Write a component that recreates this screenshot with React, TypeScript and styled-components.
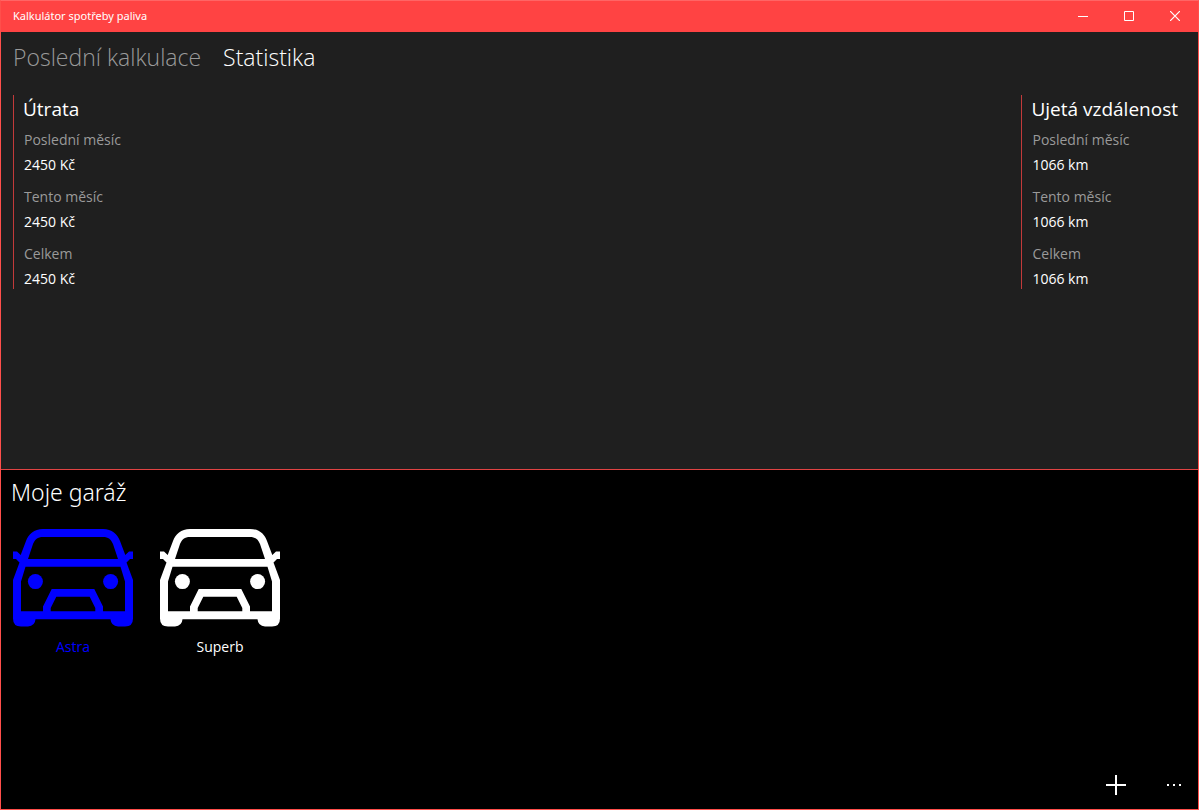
import React, { useState } from "react";
import styled, { createGlobalStyle } from "styled-components";

const GlobalStyle = createGlobalStyle`
  * { box-sizing: border-box; }
  body { margin: 0; background: #000; }
  button { font: inherit; color: inherit; background: none; border: 0; padding: 0; cursor: pointer; }
  h1, h2, h3, p, dl, dd, ul { margin: 0; padding: 0; font-weight: 400; }
`;

const Window = styled.div`
  display: flex;
  flex-direction: column;
  min-height: 100vh;
  border: 1px solid #ff4f4b;
  border-top-color: #ff6565;
  background: #000;
  color: #fff;
  font-family: "Open Sans", "Noto Sans", sans-serif;
`;

const TitleBar = styled.header`
  display: flex;
  align-items: center;
  justify-content: space-between;
  height: 31px;
  padding: 0 0 2px 12px;
  background: #ff4343;
`;

const AppTitle = styled.h1`
  font-family: "Noto Sans", "Open Sans", sans-serif;
  font-size: 11px;
  line-height: 16px;
`;

const WindowControls = styled.div`
  display: flex;
  height: 100%;
`;

const WindowButton = styled.button`
  display: grid;
  place-items: center;
  width: 46px;
`;

const Upper = styled.main`
  flex: 1;
  background: #1f1f1f;
  border-bottom: 1px solid #e04343;
`;

const Tabs = styled.div`
  display: flex;
  gap: 22px;
  padding: 9px 12px 0;
`;

const Tab = styled.button<{ $active: boolean }>`
  font-size: 23px;
  line-height: 32px;
  font-weight: 300;
  color: ${(p) => (p.$active ? "#fff" : "#9a9a9a")};
`;

const Stats = styled.div`
  display: flex;
  justify-content: space-between;
  padding: 22px 20px 0 12px;
`;

const Stat = styled.section`
  padding-left: 9px;
  border-left: 1px solid #c23a3a;
`;

const StatTitle = styled.h2`
  font-size: 19px;
  line-height: 29px;
`;

const Figures = styled.dl`
  display: grid;
  gap: 11px;
  padding: 5px 0 0 1px;
  font-size: 14px;
  line-height: 21px;
`;

const Figure = styled.div`
  display: grid;
  gap: 4px;
`;

const Label = styled.dt`
  color: #9a9a9a;
`;

const Garage = styled.section`
  display: flex;
  flex-direction: column;
  min-height: 339px;
`;

const GarageTitle = styled.h2`
  padding: 6px 10px 0;
  font-family: "Noto Sans", "Open Sans", sans-serif;
  font-size: 23px;
  line-height: 32px;
  font-weight: 300;
`;

const Cars = styled.div`
  display: flex;
  gap: 27px;
  padding: 21px 12px 0;
`;

const CarButton = styled.button<{ $selected: boolean }>`
  display: flex;
  flex-direction: column;
  align-items: center;
  gap: 7px;
  color: ${(p) => (p.$selected ? "#0000ff" : "#fff")};
  font-size: 14px;
  line-height: 25px;
`;

const CommandBar = styled.footer`
  display: flex;
  justify-content: flex-end;
  margin-top: auto;
`;

const Command = styled.button<{ $width: number }>`
  display: grid;
  place-items: center;
  width: ${(p) => p.$width}px;
  height: 48px;
`;

const CarIcon = () => (
  <svg width="120" height="98" viewBox="0 0 120 98" fill="currentColor" aria-hidden="true">
    <path
      fillRule="evenodd"
      d="M30 0H90C99 0 104.500 5 107 12L112.300 26L116 22.500H120V30H117L113.500 33.500L120 51V89.500Q120 97.500 112 97.500H105Q98 97 97.500 90.300H22.500Q22 97 15 97.500H8Q0 97.500 0 89.500V51L6.500 33.500L3 30H0V22.500H4L7.700 26L13 12C15.500 5 21 0 30 0ZM30 8C24.500 8 22 10.500 20 15L15 30H105L100 15C98 10.500 95.500 8 90 8ZM12.500 37.700L8 52.500V82.300H30V77.500L38.700 60H81.300L90 77.500V82.300H112V52.500L107.500 37.700ZM43.300 67.700L37.700 79V82.300H82.300V79L76.700 67.700Z"
    />
    <circle cx="22.400" cy="52.600" r="7.500" />
    <circle cx="97.600" cy="52.600" r="7.500" />
  </svg>
);

const spans = ["Poslední měsíc", "Tento měsíc", "Celkem"];
const stats = [
  { title: "Útrata", value: "2450 Kč" },
  { title: "Ujetá vzdálenost", value: "1066 km" },
];
const tabs = ["Poslední kalkulace", "Statistika"];
const cars = ["Astra", "Superb"];

export default function App() {
  const [tab, setTab] = useState("Statistika");
  const [car, setCar] = useState("Astra");
  return (
    <>
      <GlobalStyle />
      <Window>
        <TitleBar>
          <AppTitle>Kalkulátor spotřeby paliva</AppTitle>
          <WindowControls>
            <WindowButton aria-label="Minimalizovat">
              <svg width="10" height="10" stroke="#fff" fill="none"><path d="M0 5.500H10" /></svg>
            </WindowButton>
            <WindowButton aria-label="Maximalizovat">
              <svg width="10" height="10" stroke="#fff" fill="none"><path d="M.5 .5H9.500V9.500H.5Z" /></svg>
            </WindowButton>
            <WindowButton aria-label="Zavřít">
              <svg width="10" height="10" stroke="#fff" strokeWidth="1.200" fill="none"><path d="M0 0L10 10M10 0L0 10" /></svg>
            </WindowButton>
          </WindowControls>
        </TitleBar>
        <Upper>
          <Tabs role="tablist">
            {tabs.map((t) => (
              <Tab key={t} role="tab" aria-selected={t === tab} $active={t === tab} onClick={() => setTab(t)}>
                {t}
              </Tab>
            ))}
          </Tabs>
          <Stats>
            {stats.map((s) => (
              <Stat key={s.title}>
                <StatTitle>{s.title}</StatTitle>
                <Figures>
                  {spans.map((span) => (
                    <Figure key={span}>
                      <Label>{span}</Label>
                      <dd>{s.value}</dd>
                    </Figure>
                  ))}
                </Figures>
              </Stat>
            ))}
          </Stats>
        </Upper>
        <Garage>
          <GarageTitle>Moje garáž</GarageTitle>
          <Cars>
            {cars.map((c) => (
              <CarButton key={c} $selected={c === car} aria-pressed={c === car} onClick={() => setCar(c)}>
                <CarIcon />
                {c}
              </CarButton>
            ))}
          </Cars>
          <CommandBar>
            <Command $width={68} aria-label="Přidat">
              <svg width="20" height="20" stroke="#fff" strokeWidth="2" fill="none"><path d="M0 10H20M10 0V20" /></svg>
            </Command>
            <Command $width={48} aria-label="Další">
              <svg width="14" height="2" fill="#fff"><path d="M0 0h2v2H0zM6 0h2v2H6zM12 0h2v2h-2z" /></svg>
            </Command>
          </CommandBar>
        </Garage>
      </Window>
    </>
  );
}
